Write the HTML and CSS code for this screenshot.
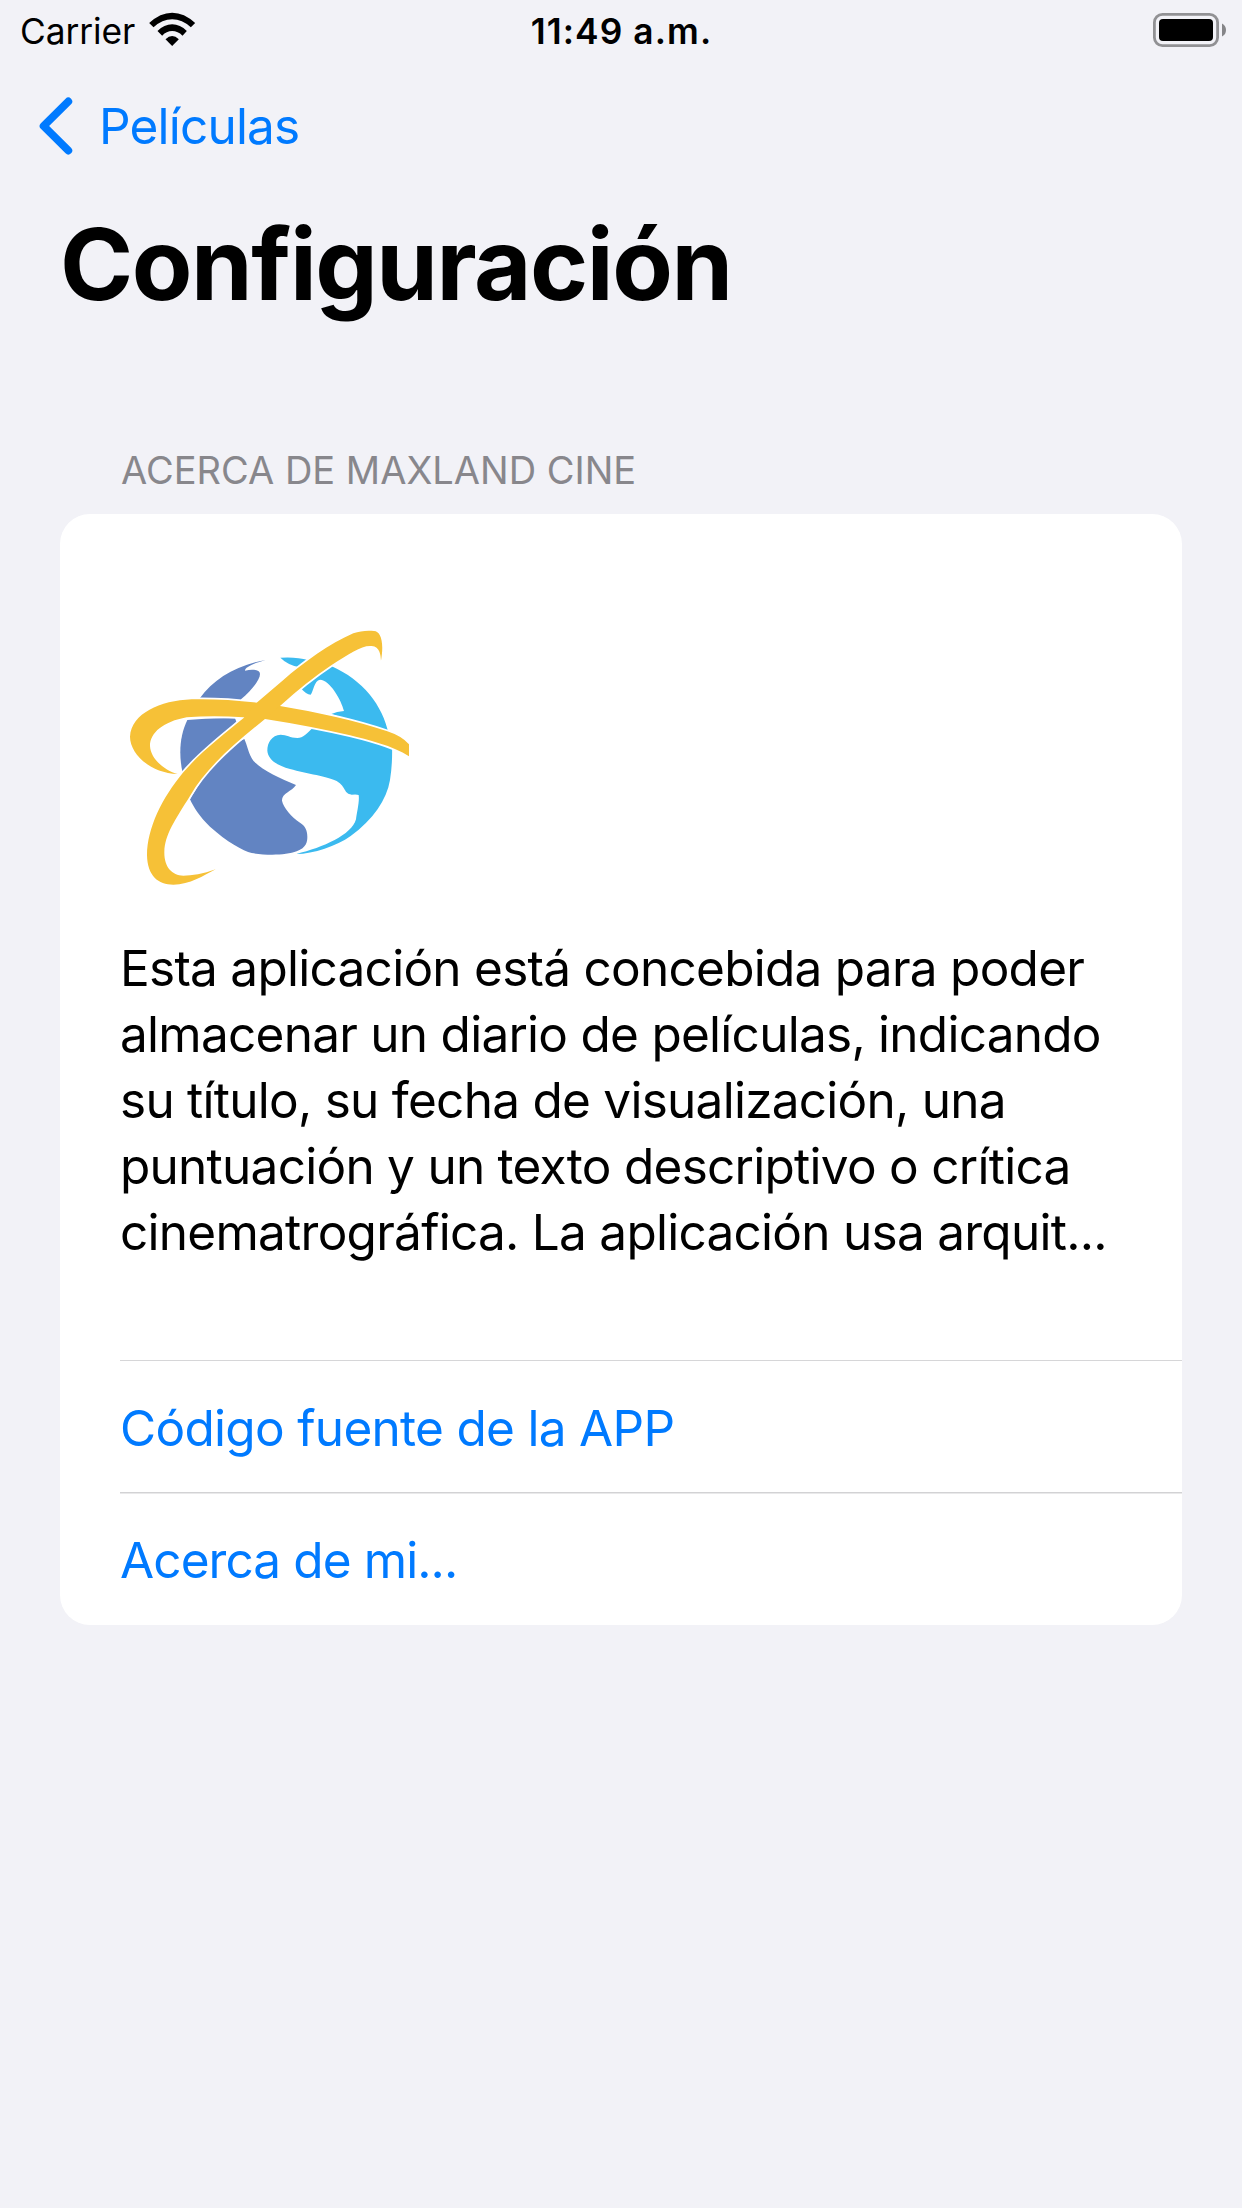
FILE: index.html
```html
<!DOCTYPE html>
<html lang="es">
<head>
<meta charset="utf-8">
<title>Configuración</title>
<link rel="stylesheet" href="styles.css">
</head>
<body>
<header class="status">
  <div class="status-left">
    <span class="carrier">Carrier</span>
    <svg class="wifi" viewBox="447 36 140 102" aria-hidden="true">
      <path d="M447 69Q480 38 516 38T585 69L572 82Q546 58 516 58T460 82Z"/>
      <path d="M472 93Q492 73 516 73T560 93L547 107Q533 93 516 93T486 107Z"/>
      <path d="M496 118Q516 98 536 118L516 138Z"/>
    </svg>
  </div>
  <span class="time">11:49 a.m.</span>
  <div class="status-right">
    <svg class="battery" viewBox="0 0 74 34" aria-hidden="true">
      <rect x="1.4" y="1.4" width="63.2" height="31.2" rx="8" fill="none" stroke="#919194" stroke-width="2.8"/>
      <rect x="6" y="6" width="54" height="22" rx="4"/>
      <path d="M69 10.5Q73 12.5 73 17T69 23.5Z" fill="#858588"/>
    </svg>
  </div>
</header>
<nav class="nav">
  <a class="back">
    <svg class="chevron" viewBox="0 0 34 58" aria-hidden="true"><path d="M29.3 4.5L4.6 29 29.3 53.5"/></svg>
    <span>Películas</span>
  </a>
</nav>
<main>
  <h1 class="title">Configuración</h1>
  <h2 class="section-title">ACERCA DE MAXLAND CINE</h2>
  <section class="card">
    <div class="about">
      <svg class="logo" viewBox="33 0 864 870" aria-hidden="true">
        <g fill="#6284c2">
          <path d="M270 264C310 208 380 165 467 150C430 160 405 172 405 182C430 176 450 180 450 192C450 212 420 245 393 268L390 285L270 280Z"/>
          <path d="M232 330Q300 323 375 325L379 335L300 420L218 490C205 430 210 375 232 330Z"/>
          <path d="M240 568C250 590 270 622 300 650C350 695 400 723 425 729C470 737 530 736 560 724C590 712 592 695 592 680C592 660 585 647 570 638C545 622 520 592 516 572C515 550 545 545 558 525C510 505 455 480 430 452C415 432 412 405 403 387L330 420Z"/>
        </g>
        <g fill="#3bbaef">
          <path d="M511 143Q560 140 594 150L566 171Q532 164 511 143Z"/>
          <path d="M665 169C758 210 818 285 836 372L790 355L664 312Q680 304 702 303C694 270 660 210 630 209C612 212 610 245 602 254Q588 252 574 236L600 190Z"/>
          <path d="M609 353C590 370 580 384 562 384C540 383 530 374 512 374C485 376 472 397 472 422C474 450 505 468 540 477C590 491 655 500 680 513C710 532 700 550 725 554Q740 552 746 555C749 575 740 610 738 628C725 675 640 712 559 732C610 732 680 708 722 678C790 628 830 570 840 510Q848 460 846 405L740 370Z"/>
        </g>
        <defs>
          <path id="orbit-wide" d="M203 492C120 490 60 430 60 380C65 310 150 272 245 268Q340 266 440 278Q500 284 510 288C620 306 740 333 832 364Q875 378 897 403V439C850 408 770 388 720 376Q600 348 465 327L400 322Q310 316 230 322C160 335 120 368 120 408C122 448 165 482 203 492Z"/>
          <path id="orbit-tall" d="M813 152C823 95 812 64 792 63C770 61 750 63 730 70C660 100 580 158 520 210L440 278L400 325C340 374 270 428 220 487C155 565 112 655 111 735C112 798 145 824 190 824C240 824 280 797 317 778C280 792 245 797 220 797C185 797 162 770 163 725C164 675 195 630 240 558C290 470 380 395 465 327L510 288Q590 215 665 165C720 130 755 105 785 108C810 110 812 135 813 152Z"/>
        </defs>
        <g fill="#fff" stroke="#fff" stroke-width="10"><use href="#orbit-wide"/><use href="#orbit-tall"/></g>
        <g fill="#f6c137"><use href="#orbit-wide"/><use href="#orbit-tall"/></g>
      </svg>
      <p class="description">Esta aplicación está concebida para poder<br>almacenar un diario de películas, indicando<br>su título, su fecha de visualización, una<br>puntuación y un texto descriptivo o crítica<br>cinematrográfica. La aplicación usa arquit...</p>
    </div>
    <a class="row">Código fuente de la APP</a>
    <a class="row row-last">Acerca de mi...</a>
  </section>
</main>
</body>
</html>
```
FILE: styles.css
```css
* { box-sizing: border-box; }
body {
  margin: 0;
  min-height: 2208px;
  background: #f2f2f7;
  color: #000;
  font-family: Inter, "Liberation Sans", sans-serif;
}
.status {
  display: grid;
  grid-template-columns: 1fr auto 1fr;
  height: 62px;
  padding: 0 15px 0 20px;
  font-size: 35.3px;
  line-height: 64px;
}
.status-left { display: flex; }
.carrier { letter-spacing: -0.07px; }
.wifi { width: 47px; height: 34px; margin: 12px 0 0 14px; }
.time { margin-right: 4px; font-weight: 600; letter-spacing: 1.1px; }
.status-right { display: flex; justify-content: flex-end; }
.battery { width: 74px; height: 34px; margin-top: 13px; }
.nav { display: flex; align-items: center; height: 128px; padding-left: 39px; }
.back {
  display: flex;
  align-items: center;
  gap: 26px;
  color: #007aff;
  font-size: 49.5px;
  line-height: 66px;
  letter-spacing: -0.8px;
}
.chevron { width: 34px; height: 58px; fill: none; stroke: #007aff; stroke-width: 7.8; stroke-linecap: round; stroke-linejoin: round; }
main { padding: 14px 60px 0; }
.title {
  margin: 0;
  font-size: 99px;
  font-weight: 700;
  line-height: 120px;
  letter-spacing: -1.47px;
}
.section-title {
  margin: 121px 0 19px;
  padding-left: 61px;
  color: #88878c;
  font-size: 38px;
  font-weight: 400;
  line-height: 50px;
}
.card { overflow: hidden; border-radius: 30px; background: #fff; }
.about { height: 846px; padding: 96px 0 0 61px; }
.logo { display: block; width: 288px; height: 290px; }
.description {
  margin: 35px 0 0 -1px;
  font-size: 49.5px;
  line-height: 66px;
  letter-spacing: -0.735px;
  white-space: nowrap;
}
.row {
  display: block;
  height: 132px;
  margin-left: 60px;
  padding-top: 34px;
  border-top: 1px solid #d6d6d8;
  color: #007aff;
  font-size: 49.5px;
  line-height: 66px;
  letter-spacing: -0.7px;
}
.row-last { height: 133px; border-top-color: #d2d2d4; box-shadow: inset 0 1px #e9e9ea; letter-spacing: -0.9px; }
```
